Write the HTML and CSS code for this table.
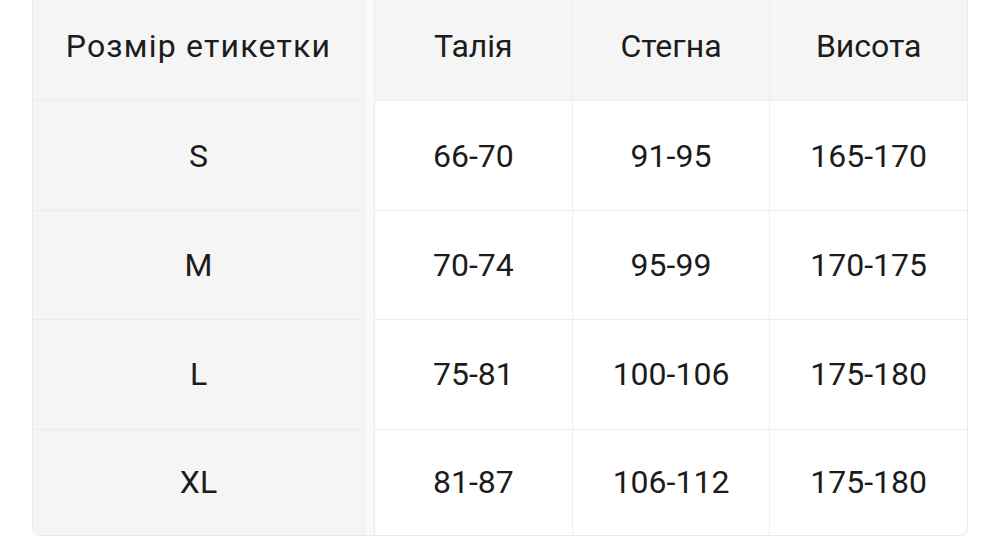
FILE: index.html
```html
<!DOCTYPE html>
<html lang="uk">
<head>
<meta charset="utf-8">
<link rel="stylesheet" href="styles.css">
</head>
<body>
<div class="sheet">
  <div class="fixed">
    <div class="cell head"><span class="label">Розмір етикетки</span></div>
    <div class="cell">S</div>
    <div class="cell">M</div>
    <div class="cell">L</div>
    <div class="cell last">XL</div>
  </div>
  <div class="gap"></div>
  <div class="scroll">
    <div class="row head">
      <div class="cell">Талія</div>
      <div class="cell">Стегна</div>
      <div class="cell">Висота</div>
    </div>
    <div class="row">
      <div class="cell">66-70</div>
      <div class="cell">91-95</div>
      <div class="cell">165-170</div>
    </div>
    <div class="row">
      <div class="cell">70-74</div>
      <div class="cell">95-99</div>
      <div class="cell">170-175</div>
    </div>
    <div class="row">
      <div class="cell">75-81</div>
      <div class="cell">100-106</div>
      <div class="cell">175-180</div>
    </div>
    <div class="row last">
      <div class="cell">81-87</div>
      <div class="cell">106-112</div>
      <div class="cell">175-180</div>
    </div>
  </div>
</div>
</body>
</html>
```

FILE: styles.css
```css
html, body {
  margin: 0;
  padding: 0;
  background: #ffffff;
  overflow: hidden;
}
body {
  font-family: Roboto, "Noto Sans", sans-serif;
  color: #1c1c1c;
  font-size: 32px;
}
.sheet {
  display: flex;
  margin: -8px 0 0 32px;
  width: 936px;
  height: 544px;
  border: 1px solid #e9e9e9;
  border-top: none;
  border-radius: 0 0 8px 8px;
  overflow: hidden;
  box-sizing: border-box;
}
.fixed {
  width: 331px;
  background: #f5f5f5;
  border-right: 1px solid #ebebeb;
  display: flex;
  flex-direction: column;
}
.gap {
  width: 9px;
  background: #f9f9f9;
  border-right: 1px solid #ebebeb;
}
.scroll {
  flex: 1;
  display: flex;
  flex-direction: column;
}
.row {
  display: flex;
  height: 110px;
  border-bottom: 1px solid #ececec;
  box-sizing: border-box;
}
.row.head {
  background: #f5f5f5;
}
.row .cell {
  flex: 1;
  border-right: 1px solid #efefef;
}
.row .cell:last-child {
  border-right: none;
}
.cell {
  display: flex;
  align-items: center;
  justify-content: center;
  box-sizing: border-box;
}
.label {
  letter-spacing: 1.2px;
}
.fixed .cell {
  height: 110px;
  border-bottom: 1px solid #ebebeb;
}
.fixed .cell.last, .row.last {
  border-bottom: none;
  height: 106px;
}
```
